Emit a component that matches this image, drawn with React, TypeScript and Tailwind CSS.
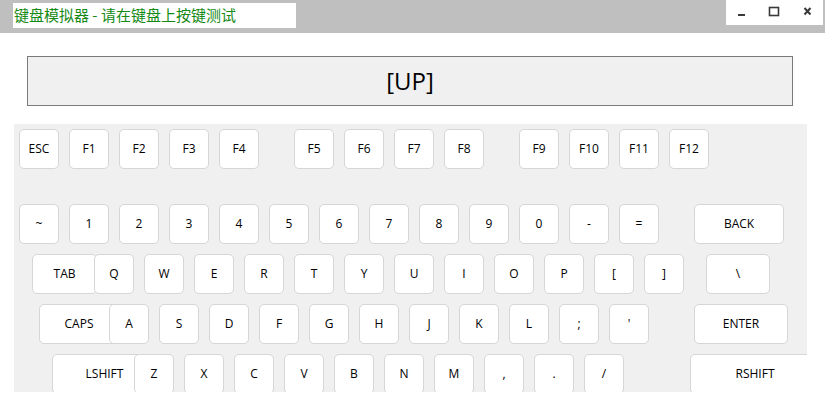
import React from "react";

const font = { fontFamily: '"Open Sans", "Noto Sans", "Noto Sans CJK SC", sans-serif' };

function Key({ label, className = "" }: { label: string; className?: string }) {
  return (
    <div
      className={`flex h-[40px] w-[40px] shrink-0 items-center justify-center rounded-[5px] border border-[#d6d6d6] bg-white text-[12px] text-black ${className}`}
    >
      {label}
    </div>
  );
}

export default function App() {
  const fRow1 = ["F1", "F2", "F3", "F4"];
  const fRow2 = ["F5", "F6", "F7", "F8"];
  const fRow3 = ["F9", "F10", "F11", "F12"];
  const nums = ["1", "2", "3", "4", "5", "6", "7", "8", "9", "0", "-", "="];
  const qrow = ["W", "E", "R", "T", "Y", "U", "I", "O", "P", "[", "]"];
  const arow = ["S", "D", "F", "G", "H", "J", "K", "L", ";", "'"];
  const zrow = ["X", "C", "V", "B", "N", "M", ",", ".", "/"];

  return (
    <div className="h-[413px] w-[825px] overflow-hidden bg-white" style={font}>
      {/* title bar */}
      <div className="flex h-[33px] items-start justify-between bg-[#bfbfbf]">
        <div className="ml-[13px] mt-[3px] flex h-[25px] w-[283px] items-center bg-white text-[15px] text-[#168a16]" style={{ fontFamily: '"Noto Sans CJK SC", "Noto Sans", sans-serif' }}>
          <span className="ml-[1px]">键盘模拟器 - 请在键盘上按键测试</span>
        </div>
        <div className="mr-[2px] flex h-[25px] w-[97px] items-center bg-white">
          <svg width="97" height="25" viewBox="0 0 97 25">
            <rect x="12" y="14" width="7" height="2" fill="#3a3a3a" />
            <rect x="43.5" y="7.5" width="9" height="8" fill="none" stroke="#3a3a3a" strokeWidth="1.6" />
            <path d="M78.5 8 L84.5 14.5 M84.5 8 L78.5 14.5" stroke="#3a3a3a" strokeWidth="2" />
          </svg>
        </div>
      </div>

      {/* display */}
      <div className="mx-[27px] mt-[23px] flex h-[50px] w-[766px] items-center justify-center border border-[#7a7a7a] bg-[#f0f0f0] text-[24px] text-black">
        [UP]
      </div>

      {/* keyboard panel */}
      <div className="ml-[14px] mt-[18px] h-[268px] w-[793px] overflow-hidden bg-[#f0f0f0] pt-[5px]">
        <div className="ml-[5px] flex gap-[10px]">
          <Key label="ESC" />
          {fRow1.map((k) => (
            <Key key={k} label={k} />
          ))}
          {fRow2.map((k, i) => (
            <Key key={k} label={k} className={i === 0 ? "ml-[25px]" : ""} />
          ))}
          {fRow3.map((k, i) => (
            <Key key={k} label={k} className={i === 0 ? "ml-[25px]" : ""} />
          ))}
        </div>

        <div className="mt-[35px] ml-[5px] flex gap-[10px]">
          <Key label="~" />
          {nums.map((k) => (
            <Key key={k} label={k} />
          ))}
          <Key label="BACK" className="ml-[25px] w-[90px]" />
        </div>

        <div className="mt-[10px] ml-[18px] flex gap-[10px]">
          <Key label="TAB" className="w-[65px]" />
          <Key label="Q" className="-ml-[13px]" />
          {qrow.map((k) => (
            <Key key={k} label={k} />
          ))}
          <Key label="\" className="ml-[12px] w-[64px]" />
        </div>

        <div className="mt-[10px] ml-[25px] flex gap-[10px]">
          <Key label="CAPS" className="w-[80px]" />
          <Key label="A" className="-ml-[20px]" />
          {arow.map((k) => (
            <Key key={k} label={k} />
          ))}
          <Key label="ENTER" className="ml-[35px] w-[94px]" />
        </div>

        <div className="mt-[10px] ml-[38px] flex gap-[10px]">
          <Key label="LSHIFT" className="w-[105px]" />
          <Key label="Z" className="-ml-[33px]" />
          {zrow.map((k) => (
            <Key key={k} label={k} />
          ))}
          <Key label="RSHIFT" className="ml-[56px] w-[130px]" />
        </div>
      </div>
    </div>
  );
}
